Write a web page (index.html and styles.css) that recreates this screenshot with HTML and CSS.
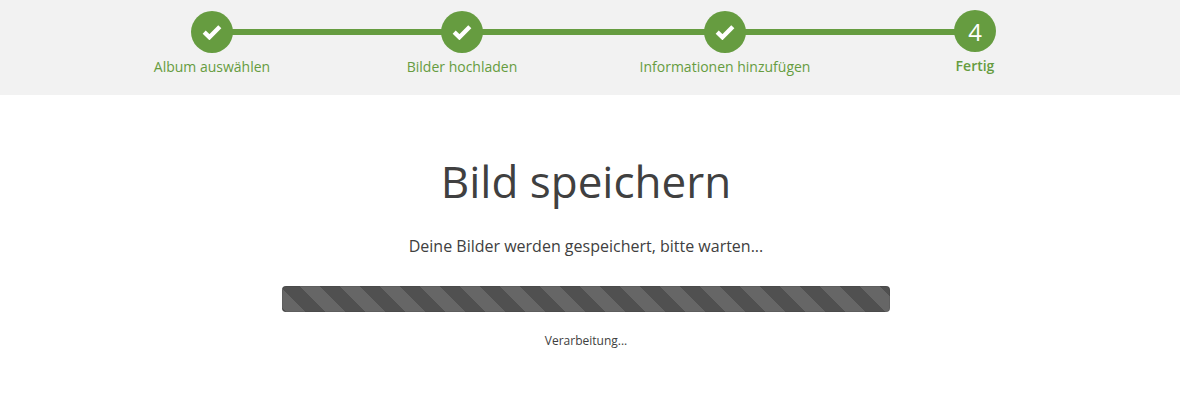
FILE: index.html
```html
<!DOCTYPE html>
<html lang="de">
<head>
    <meta charset="UTF-8">
    <title>Bild speichern</title>
    <link rel="stylesheet" href="styles.css">
</head>
<body>
    <div class="steps">
        <div class="step done">
            <span class="circle"><svg class="check" viewBox="0 0 20 16"><path d="M2.2 8.2 7.4 13.2 17.8 2.8"/></svg></span>
            <span class="label">Album auswählen</span>
        </div>
        <div class="step done">
            <span class="circle"><svg class="check" viewBox="0 0 20 16"><path d="M2.2 8.2 7.4 13.2 17.8 2.8"/></svg></span>
            <span class="label">Bilder hochladen</span>
        </div>
        <div class="step done">
            <span class="circle"><svg class="check" viewBox="0 0 20 16"><path d="M2.2 8.2 7.4 13.2 17.8 2.8"/></svg></span>
            <span class="label">Informationen hinzufügen</span>
        </div>
        <div class="step current">
            <span class="circle">4</span>
            <span class="label">Fertig</span>
        </div>
    </div>

    <div class="content">
        <h1>Bild speichern</h1>
        <p class="message">Deine Bilder werden gespeichert, bitte warten...</p>
        <div class="progress"></div>
        <p class="status">Verarbeitung...</p>
    </div>
</body>
</html>
```

FILE: styles.css
```css
body {
    margin: 0;
    font-family: "Open Sans", sans-serif;
    color: #404040;
    background: white;
}
.steps {
    display: grid;
    grid-template-columns: 237px 263px 263px 237px;
    height: 95px;
    padding-left: 93.5px;
    background: #f2f2f2;
    box-sizing: border-box;
}
.step {
    position: relative;
    display: flex;
    flex-direction: column;
    align-items: center;
    padding-top: 11px;
}
/* connector to the next step */
.step.done::after {
    content: "";
    position: absolute;
    top: 29px;
    left: 50%;
    width: 270px;
    height: 6px;
    background: #669c40;
}
.circle {
    position: relative;
    z-index: 1;
    display: flex;
    align-items: center;
    justify-content: center;
    width: 42px;
    height: 42px;
    border-radius: 50%;
    background: #669c40;
    color: white;
    font-size: 24px;
}
.step.current {
    padding-top: 10px;
}
.check {
    width: 20px;
    height: 16px;
    fill: none;
    stroke: white;
    stroke-width: 4.4;
}
.label {
    margin-top: 4px;
    font-size: 14px;
    line-height: 19px;
    color: #669c40;
    white-space: nowrap;
}
.step.current .label {
    margin-top: 4px;
    font-weight: 600;
}
.content {
    display: flex;
    flex-direction: column;
    align-items: center;
    padding-right: 8px;
}
h1 {
    margin: 55px 0 0;
    font-size: 44px;
    font-weight: normal;
    line-height: 62px;
}
.message {
    margin: 23px 0 0;
    font-size: 16px;
    line-height: 22px;
}
.progress {
    width: 608px;
    height: 26px;
    margin-top: 29px;
    border-radius: 4px;
    box-shadow: inset 0 0 0 1px rgba(0, 0, 0, 0.07);
    background: repeating-linear-gradient(45deg, #505050 -11.31px, #505050 2.83px, #666 2.83px, #666 16.97px);
}
.status {
    margin: 20px 0 0;
    font-size: 12px;
    line-height: 17px;
}
```
